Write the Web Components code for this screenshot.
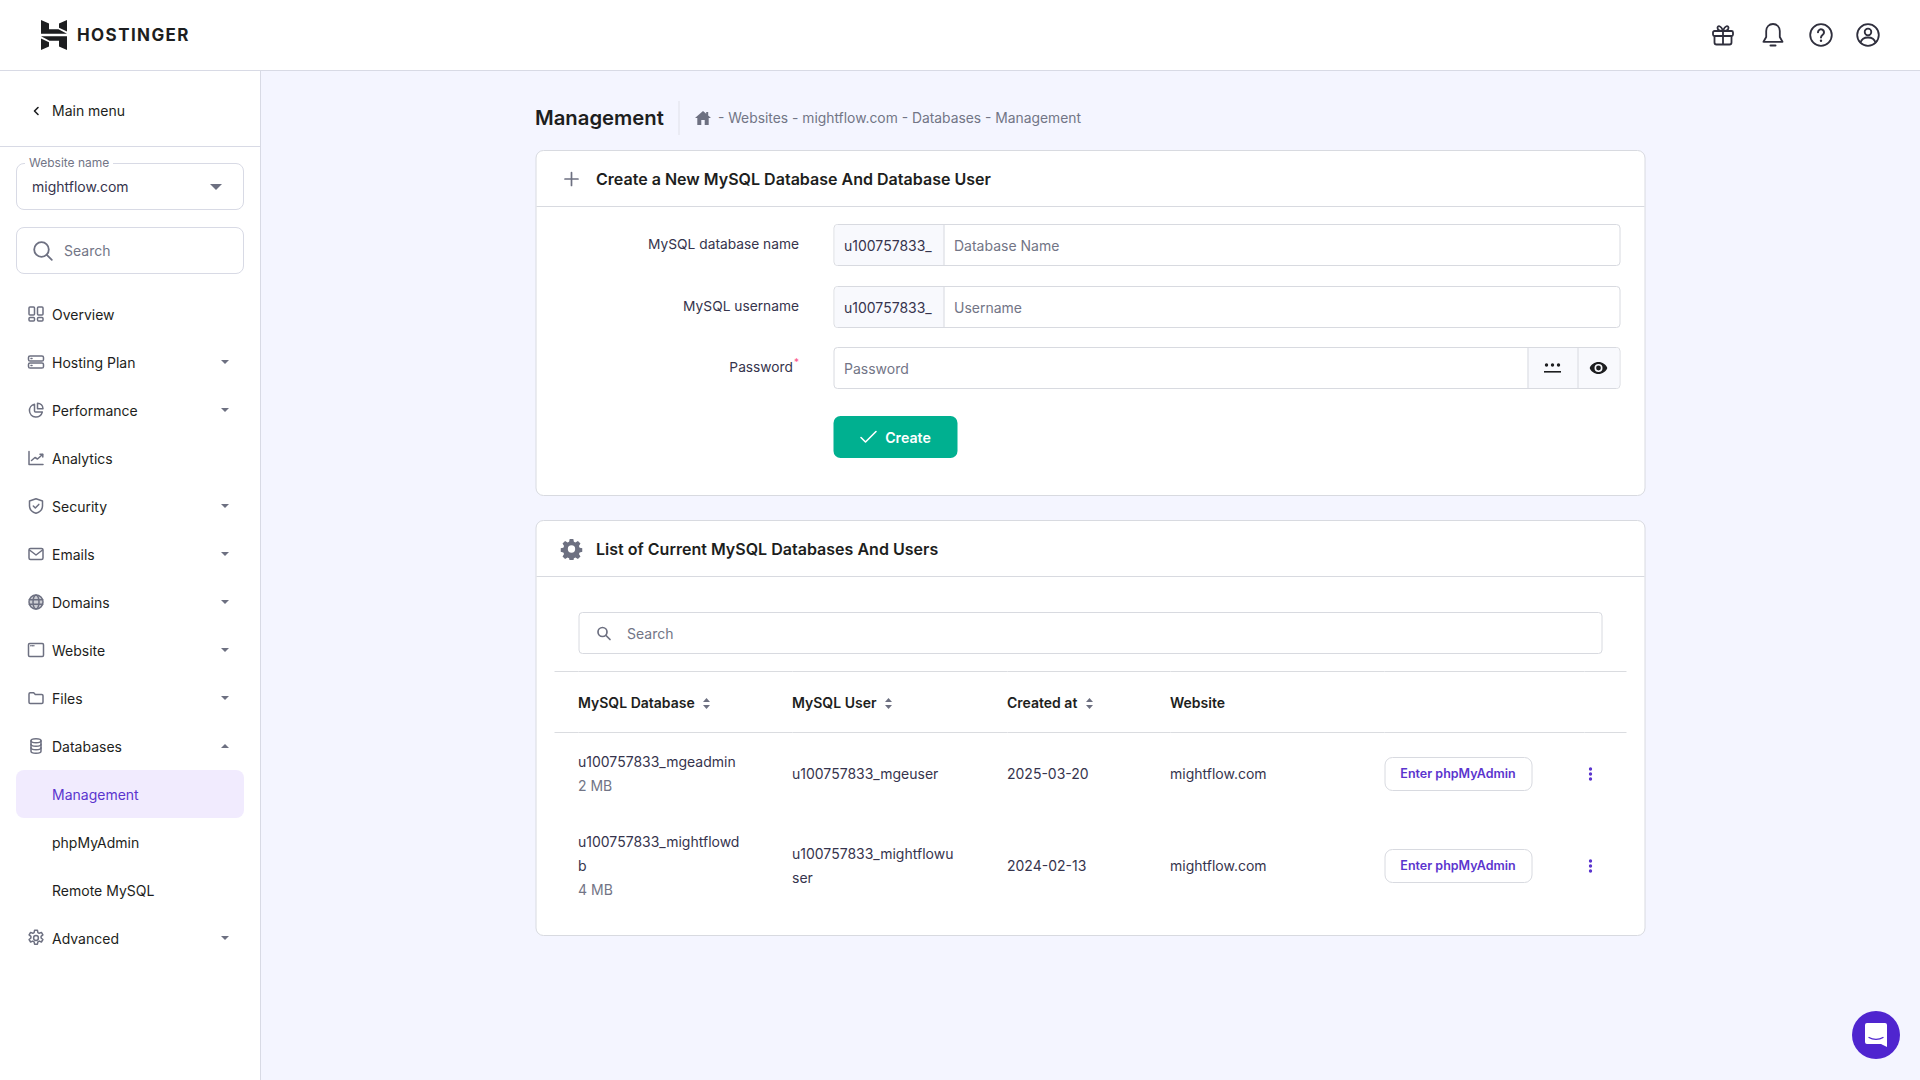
<!DOCTYPE html>
<html lang="en"><head><meta charset="utf-8"><title>Management</title>
<style>
html,body{margin:0;height:100%;overflow:hidden;background:#f4f5ff;font-family:Inter,"Liberation Sans",sans-serif;color:#1d1e20;font-size:14px}
</style></head><body>
<hp-app>
  <hp-header slot="header"></hp-header>
  <hp-sidebar slot="side">
    <hp-nav icon="overview">Overview</hp-nav>
    <hp-nav icon="plan" caret="down">Hosting Plan</hp-nav>
    <hp-nav icon="perf" caret="down">Performance</hp-nav>
    <hp-nav icon="chart">Analytics</hp-nav>
    <hp-nav icon="shield" caret="down">Security</hp-nav>
    <hp-nav icon="mail" caret="down">Emails</hp-nav>
    <hp-nav icon="globe" caret="down">Domains</hp-nav>
    <hp-nav icon="window" caret="down">Website</hp-nav>
    <hp-nav icon="folder" caret="down">Files</hp-nav>
    <hp-nav icon="db" caret="up">Databases</hp-nav>
    <hp-nav active>Management</hp-nav>
    <hp-nav sub>phpMyAdmin</hp-nav>
    <hp-nav sub>Remote MySQL</hp-nav>
    <hp-nav icon="cog" caret="down">Advanced</hp-nav>
  </hp-sidebar>
  <hp-page slot="main">
    <hp-card icon="plus" heading="Create a New MySQL Database And Database User">
      <hp-create-form></hp-create-form>
    </hp-card>
    <hp-card icon="gear" heading="List of Current MySQL Databases And Users">
      <hp-db-table></hp-db-table>
    </hp-card>
  </hp-page>
</hp-app>
<hp-chat></hp-chat>
<script>
const S='fill="none" stroke="currentColor" stroke-width="1.5" stroke-linecap="round" stroke-linejoin="round"';
const ICONS={
overview:`<svg width="18" height="18" viewBox="0 0 18 18" ${S} stroke-width="1.3"><rect x="2" y="2" width="5.5" height="8" rx="1"/><rect x="10.5" y="2" width="5.5" height="8" rx="1"/><rect x="2" y="12.5" width="5.5" height="3.5" rx="1"/><rect x="10.5" y="12.5" width="5.5" height="3.5" rx="1"/></svg>`,
plan:`<svg width="18" height="18" viewBox="0 0 18 18" ${S} stroke-width="1.3"><rect x="1.5" y="3" width="15" height="5" rx="1.6"/><rect x="1.5" y="10" width="15" height="5" rx="1.6"/><path d="M4 5.500h1M4 12.500h1"/></svg>`,
perf:`<svg width="18" height="18" viewBox="0 0 18 18" ${S} stroke-width="1.3"><path d="M7.500 3.200A6.500 6.500 0 1 0 15.300 11H8.500a1 1 0 0 1-1-1z"/><path d="M10.500 2.200A5.500 5.500 0 0 1 16 7.800h-5.500z"/></svg>`,
chart:`<svg width="18" height="18" viewBox="0 0 18 18" ${S} stroke-width="1.2"><path d="M2 2.500V15.500H16"/><path d="M4.500 11.500 8 8.500l2.500 1.500 5-4.500"/><path d="M13 5.200h2.800V8"/></svg>`,
shield:`<svg width="18" height="18" viewBox="0 0 18 18" ${S} stroke-width="1.3"><path d="M9 1.800 15.500 4v5c0 3.800-2.800 6-6.500 7.300C5.300 15 2.500 12.800 2.500 9V4z"/><path d="m6.300 9 2 2 3.500-3.600"/></svg>`,
mail:`<svg width="18" height="18" viewBox="0 0 18 18" ${S} stroke-width="1.3"><rect x="2" y="3.500" width="14" height="11" rx="1.500"/><path d="m2.500 5 6.500 5 6.500-5"/></svg>`,
globe:`<svg width="18" height="18" viewBox="0 0 18 18" ${S} stroke-width="1.2"><circle cx="9" cy="9" r="7" fill="currentColor" fill-opacity=".35"/><ellipse cx="9" cy="9" rx="3" ry="7"/><path d="M2.300 6.800h13.400M2.300 11.200h13.400"/></svg>`,
window:`<svg width="18" height="18" viewBox="0 0 18 18" ${S} stroke-width="1.100"><rect x="1.500" y="2.500" width="15" height="13" rx="1.200"/><path d="M3.800 4.800h.1M5.300 4.800h.1M6.800 4.800h.1"/></svg>`,
folder:`<svg width="18" height="18" viewBox="0 0 18 18" ${S} stroke-width="1.300"><path d="M2 5a1.200 1.200 0 0 1 1.200-1.200h3.500l1.600 1.700h6.500A1.200 1.200 0 0 1 16 6.700v6.600a1.200 1.200 0 0 1-1.200 1.200H3.200A1.200 1.200 0 0 1 2 13.300z"/></svg>`,
db:`<svg width="18" height="18" viewBox="0 0 18 18" ${S} stroke-width="1.200"><ellipse cx="9" cy="3.800" rx="5" ry="2"/><path d="M4 3.800v10.400c0 1.100 2.200 2 5 2s5-.9 5-2V3.800"/><path d="M4 7.300c0 1.100 2.200 2 5 2s5-.9 5-2M4 10.800c0 1.100 2.200 2 5 2s5-.9 5-2"/></svg>`,
cog:`<svg width="18" height="18" viewBox="0 0 18 18" ${S} stroke-width="1.200"><circle cx="9" cy="9" r="2.400"/><path d="M7.600 1.200h2.800l.5 2.400 1.300.7 2.200-.9 1.500 2.500-1.800 1.500v1.600l1.800 1.500-1.500 2.500-2.200-.9-1.300.7-.5 2.400H7.600l-.5-2.400-1.300-.7-2.200.9-1.500-2.500 1.800-1.500V7.400L2.100 5.900l1.500-2.500 2.200.9 1.300-.7z"/></svg>`
};
function def(name,html,setup){customElements.define(name,class extends HTMLElement{
  constructor(){super();this.attachShadow({mode:'open'})}
  connectedCallback(){this.shadowRoot.innerHTML=typeof html==='function'?html(this):html;if(setup)setup(this)}
})}
def('hp-app',`<style>:host{display:grid;grid-template:71px 1fr/261px 1fr;height:100vh}
::slotted([slot=header]){grid-column:1/3}</style>
<slot name="header"></slot><slot name="side"></slot><slot name="main"></slot>`);

def('hp-header',`<style>:host{display:flex;align-items:center;justify-content:space-between;background:#fff;border-bottom:1px solid #d8dae5;box-sizing:border-box;height:71px;padding:0 40px 1px 40px;color:#2f2f3d}
.logo{display:flex;align-items:center;gap:9px}
.name{font:700 17px Inter,sans-serif;letter-spacing:1.400px;color:#1d1e20}
.tools{display:flex;align-items:center}
.gift{margin-right:25.700px}.bell{margin-right:24.300px}.help{margin-right:23px}
svg{display:block}</style>
<div class="logo"><svg width="28" height="30" viewBox="0 0 26 30" fill="#1d1e20"><path d="M0 0 8 3.500V9.300H17.500L26 13.700H0z"/><path d="M18 3.500 26 0V11.500L18 7.700z"/><path d="M26 30 18 26.500V20.700H8.500L0 16.300H26z"/><path d="M8 26.500 0 30V18.500L8 22.300z"/></svg><span class="name">HOSTINGER</span></div>
<div class="tools">
<svg class="gift" width="24" height="24" viewBox="0 0 24 24" fill="none" stroke="currentColor" stroke-width="1.800" stroke-linejoin="round" stroke-linecap="round"><rect x="2" y="8" width="20" height="5" rx="1.500"/><path d="M3.500 13v6.500a2 2 0 0 0 2 2h13a2 2 0 0 0 2-2V13M12 8v13.500"/><path d="M12 8C9 8 6.500 6.800 6.500 4.800c0-2.400 3.500-2.800 5.500 3.200 2-6 5.500-5.600 5.500-3.200C17.500 6.800 15 8 12 8z"/></svg>
<svg class="bell" width="24" height="26" viewBox="0 0 24 26" fill="none" stroke="currentColor" stroke-width="1.800" stroke-linecap="round" stroke-linejoin="round"><path d="M12 2c-4 0-6.800 3-6.800 7v6L2.500 19.800h19L18.800 15V9c0-4-2.800-7-6.800-7z"/><path d="M9.500 23.500h5" stroke-width="2"/></svg>
<svg class="help" width="24" height="24" viewBox="0 0 24 24" fill="none" stroke="currentColor" stroke-width="1.800" stroke-linecap="round"><circle cx="12" cy="12" r="10.800"/><path d="M9 9.300a3 3 0 1 1 4.700 2.500c-1.100.8-1.700 1.300-1.700 2.700" stroke-width="2"/><path d="M12 17.700v.1" stroke-width="2.400"/></svg>
<svg width="24" height="24" viewBox="0 0 24 24" fill="none" stroke="currentColor" stroke-width="1.800" stroke-linecap="round"><circle cx="12" cy="12" r="10.800"/><circle cx="12" cy="9" r="3.300"/><path d="M4.500 19.500c1-3.300 4-5 7.500-5s6.500 1.700 7.500 5"/></svg>
</div>`);

def('hp-sidebar',`<style>:host{display:block;background:#fff;border-right:1px solid #d8dae5;box-sizing:border-box;width:261px;height:1009px}
.back{height:76px;border-bottom:1px solid #d8dae5;display:flex;align-items:center;padding:4px 0 0 31px;gap:11px;font-size:14px;box-sizing:border-box}
.back svg{display:block}
.box{position:relative;margin:16px 16px 0;height:47px;border:1px solid #d8dae5;border-radius:8px;box-sizing:border-box;display:flex;align-items:center;padding:0 15px;color:#36344d}
.legend{position:absolute;left:8px;top:-8.500px;background:#fff;padding:0 4px;font-size:12px;line-height:14px;color:#727586}
.tri{margin-left:auto;width:0;height:0;border:6.500px solid transparent;border-top:6.500px solid #6d7081;border-bottom:0;margin-right:6px}
.search{margin-top:17px;gap:10px;color:#727586}
nav{margin:16px 16px 0;display:block}
</style>
<div class="back"><svg width="10" height="12" viewBox="0 0 10 12" fill="none" stroke="#1d1e20" stroke-width="1.600" stroke-linecap="round" stroke-linejoin="round"><path d="M7 2.500 3.500 6 7 9.500"/></svg><span>Main menu</span></div>
<div class="box"><span class="legend">Website name</span><span>mightflow.com</span><span class="tri"></span></div>
<div class="box search"><svg width="22" height="22" viewBox="0 0 22 22" fill="none" stroke="#6d7081" stroke-width="1.800" stroke-linecap="round"><circle cx="9.500" cy="9.500" r="7.300"/><path d="m14.800 14.800 5 5"/></svg><span>Search</span></div>
<nav><slot></slot></nav>`);

def('hp-nav',el=>{
 const ic=el.getAttribute('icon'),c=el.getAttribute('caret');
 return `<style>:host{display:flex;align-items:center;height:48px;border-radius:8px;padding-left:36px;padding-right:15px;position:relative;font-size:14px;color:#1d1e20}
 :host([active]){background:#f1ebfe;color:#5b35ce}
 .i{position:absolute;left:11px;top:15px;color:#6d7081;display:block;line-height:0}
 .c{margin-left:auto;width:0;height:0;border:4.200px solid transparent;margin-right:.5px}
 .down{border-top:4.600px solid #6d7081;border-bottom:0}
 .up{border-bottom:4.600px solid #6d7081;border-top:0}</style>
 ${ic?`<span class="i">${ICONS[ic]}</span>`:''}<span><slot></slot></span>${c?`<span class="c ${c}"></span>`:''}`});

def('hp-page',`<style>:host{display:block;width:1110px;margin:0 auto;transform:translateX(-.5px)}
.top{height:79px;display:flex;align-items:center;box-sizing:border-box;padding-top:15px}
h1{margin:0;font:600 20.300px Inter,sans-serif;color:#1d1e20;padding-right:15px;border-right:1px solid #dfe1ea;line-height:34px}
.crumb{display:flex;align-items:center;gap:6px;margin:-1px 0 0 15px;color:#727586;font-size:13.850px}
.crumb svg{display:block}
.stack{display:grid;gap:24px}</style>
<div class="top"><h1>Management</h1><div class="crumb"><svg width="17" height="16" viewBox="0 0 17 16" fill="#6d7081"><path d="M8.500 1 0.500 8h2.300v7h4V10h3.400v5h4V8h2.300l-2.800-2.500V2h-2v1.700z"/></svg><span>- Websites - mightflow.com - Databases - Management</span></div></div>
<div class="stack"><slot></slot></div>`);

def('hp-card',el=>{
 const plus=`<svg width="18" height="18" viewBox="0 0 18 18" stroke="#6d7081" stroke-width="1.700" stroke-linecap="round"><path d="M9 2.500v13M2.500 9h13"/></svg>`;
 const gear=`<svg width="22" height="22" viewBox="0 0 24 24" fill="#6d7081"><path fill-rule="evenodd" d="M14 1.500l.6 3.100 1.700.8 2.700-1.700 2.800 2.900-1.700 2.600.8 1.800 3.100.6v4l-3.100.6-.8 1.800 1.700 2.600-2.800 2.900-2.700-1.700-1.700.8-.6 3.100h-4l-.6-3.100-1.700-.8-2.700 1.700-2.800-2.900 1.700-2.600-.8-1.800-3.100-.6v-4l3.100-.6.800-1.800-1.700-2.600L5 3.700l2.700 1.700 1.700-.8.6-3.100zM12 8.500a4 4 0 1 0 0 8 4 4 0 0 0 0-8z" transform="translate(0 -.5)"/></svg>`;
 return `<style>:host{display:block;background:#fff;border:1px solid #d8dae0;border-radius:8px;box-sizing:border-box}
 .h{height:56px;display:flex;align-items:center;border-bottom:1px solid #d8dae0;padding-left:24px;box-sizing:border-box;gap:0}
 .ic{width:22px;display:flex;justify-content:center;margin-right:14px}
 .t{font:600 16.050px Inter,sans-serif;color:#1d1e20}
 svg{display:block}</style>
 <div class="h"><span class="ic">${el.getAttribute('icon')==='plus'?plus:gear}</span><span class="t">${el.getAttribute('heading')}</span></div><slot></slot>`});

def('hp-create-form',`<style>:host{display:block;padding:17px 24px 37px 0}
.row{display:grid;grid-template-columns:263px 1fr;column-gap:34px;align-items:center;height:42px;margin-bottom:20px;font-size:14px;color:#36344d}
.lab{text-align:right;font-size:13.750px;margin-top:-2px}
sup{color:#fc5185;font-size:10px;line-height:0;vertical-align:6px;margin-left:1px}
.in{display:flex;height:42px;border:1px solid #d8dae0;border-radius:4px;box-sizing:border-box;align-items:center;color:#727586;overflow:hidden}
.pre{width:110px;height:100%;background:#f8f9fd;border-right:1px solid #d8dae0;display:flex;align-items:center;padding-left:10px;box-sizing:border-box;color:#36344d;flex:none}
.ph{padding-left:10px;flex:1}
.tool{height:100%;background:#f8f9fd;border-left:1px solid #d8dae0;display:flex;align-items:center;justify-content:center;box-sizing:border-box;flex:none;color:#1d1e20}
button{all:unset;margin:27px 0 0 297px;width:124px;height:42px;background:#00b090;color:#fff;font:600 14.200px Inter,sans-serif;border-radius:7px;display:flex;align-items:center;justify-content:center;gap:8px;box-sizing:border-box}
svg{display:block}</style>
<div class="row"><span class="lab">MySQL database name</span><div class="in"><span class="pre">u100757833_</span><span class="ph">Database Name</span></div></div>
<div class="row"><span class="lab">MySQL username</span><div class="in"><span class="pre">u100757833_</span><span class="ph">Username</span></div></div>
<div class="row" style="margin:-1px 0 0"><span class="lab">Password<sup>*</sup></span><div class="in"><span class="ph">Password</span>
<span class="tool" style="width:50px"><svg width="18" height="12" viewBox="0 0 18 12" fill="currentColor"><circle cx="3" cy="3" r="1.700"/><circle cx="9" cy="3" r="1.700"/><circle cx="15" cy="3" r="1.700"/><rect x=".5" y="9" width="17" height="1.600"/></svg></span>
<span class="tool" style="width:42px"><svg width="18" height="12" viewBox="0 0 18 12"><path fill="currentColor" fill-rule="evenodd" d="M9 0C5 0 1.700 2.400 0 6c1.700 3.600 5 6 9 6s7.300-2.400 9-6c-1.700-3.600-5-6-9-6zm0 10a4 4 0 1 1 0-8 4 4 0 0 1 0 8zm0-6.400a2.400 2.400 0 1 0 0 4.800 2.400 2.400 0 0 0 0-4.800z"/></svg></span></div></div>
<button><svg width="18" height="14" viewBox="0 0 18 14" fill="none" stroke="#fff" stroke-width="1.600" stroke-linecap="round" stroke-linejoin="round"><path d="M1.500 7.500 6 12 16.500 1.500"/></svg>Create</button>`);

def('hp-sort',`<style>:host{display:inline-block;margin-left:8px;line-height:0}</style><svg width="8" height="11" viewBox="0 0 8 11" fill="#6d7081"><path d="M4 0 7.500 4H.5zM4 11 .5 7h7z"/></svg>`);

def('hp-db-table',`<style>:host{display:block;padding:35px 18px 18px;font-size:14px;color:#36344d}
.s{margin:0 24px 17px;height:42px;border:1px solid #d8dae0;border-radius:4px;box-sizing:border-box;display:flex;align-items:center;padding-left:17px;gap:16px;color:#727586}
.grid{display:grid;grid-template-columns:24px 214px 215px 163px 214px 200px 1fr}
.r{display:contents}
.r>*{display:flex;flex-direction:column;justify-content:center;line-height:24px;box-sizing:border-box}
.th>*{height:62px;flex-direction:row;justify-content:flex-start;align-items:center;font-weight:600;color:#1d1e20;border-top:1px solid #dadce0;border-bottom:1px solid #dadce0;padding-top:2px}
.a>*{height:82px}.b>*{height:102px}
.mb{color:#727586}
.btn{width:148px;height:34px;border:1px solid #d8dae0;border-radius:8px;box-sizing:border-box;display:flex;align-items:center;justify-content:center;color:#5b35ce;font-weight:600;font-size:12.500px;background:#fff}
.act{align-items:flex-start}
.dots{align-items:flex-start;padding-left:4px}
svg{display:block}</style>
<div class="s"><svg width="15" height="15" viewBox="0 0 15 15" fill="none" stroke="#6d7081" stroke-width="1.700" stroke-linecap="round"><circle cx="6" cy="6" r="4.500"/><path d="m9.500 9.500 4 4"/></svg><span>Search</span></div>
<div class="grid">
<div class="r th"><i></i><div>MySQL Database<hp-sort></hp-sort></div><div>MySQL User<hp-sort></hp-sort></div><div>Created at<hp-sort></hp-sort></div><div>Website</div><i></i><i></i></div>
<div class="r a"><i></i><div><span>u100757833_mgeadmin</span><span class="mb">2 MB</span></div><div>u100757833_mgeuser</div><div>2025-03-20</div><div>mightflow.com</div><div class="act"><span class="btn">Enter phpMyAdmin</span></div><div class="dots"><hp-kebab></hp-kebab></div></div>
<div class="r b"><i></i><div><span>u100757833_mightflowd<br>b</span><span class="mb">4 MB</span></div><div><span>u100757833_mightflowu<br>ser</span></div><div>2024-02-13</div><div>mightflow.com</div><div class="act"><span class="btn">Enter phpMyAdmin</span></div><div class="dots"><hp-kebab></hp-kebab></div></div>
</div>`);

def('hp-kebab',`<style>:host{display:block;line-height:0}</style><svg width="4" height="14" viewBox="0 0 4 14" fill="#5b35ce"><circle cx="2" cy="2" r="1.700"/><circle cx="2" cy="7" r="1.700"/><circle cx="2" cy="12" r="1.700"/></svg>`);

def('hp-chat',`<style>:host{position:fixed;right:20px;bottom:21px;width:48px;height:48px;border-radius:50%;background:#4f25cf;display:flex;align-items:center;justify-content:center}svg{display:block}</style>
<svg width="24" height="26" viewBox="0 0 24 26"><path fill="#fff" d="M3 1h18a2 2 0 0 1 2 2v22l-6-3H3a2 2 0 0 1-2-2V3a2 2 0 0 1 2-2z"/><path d="M5 15.500c4 2.500 10 2.500 14 0" fill="none" stroke="#4f25cf" stroke-width="1.300" stroke-linecap="round"/></svg>`);
</script>
</body></html>
